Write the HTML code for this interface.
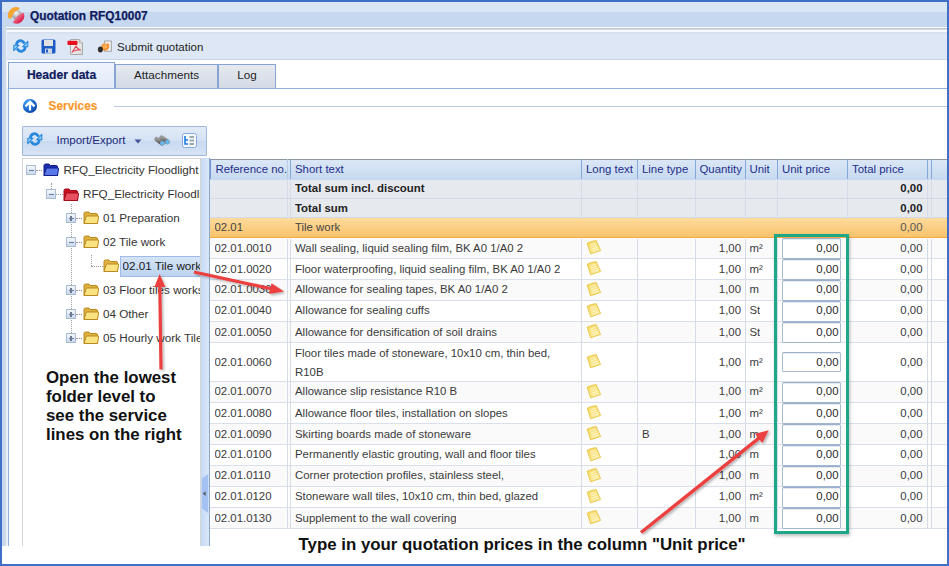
<!DOCTYPE html><html><head><meta charset="utf-8"><style>
*{box-sizing:border-box;margin:0;padding:0}
html,body{width:949px;height:566px;overflow:hidden;background:#fff;font-family:"Liberation Sans",sans-serif;}
.a{position:absolute}
.t{position:absolute;white-space:nowrap}
#frame{left:0;top:0;width:949px;height:566px;border:2px solid #3f6fc6}
#title{left:2px;top:2px;width:945px;height:25px;background:linear-gradient(#d9e6f6 0,#d9e6f6 10.5px,#c5d8ef 10.5px,#c5d8ef 100%)}
#sidebar{left:2px;top:27px;width:4px;height:519px;background:#c6d7ee}
#panel{left:5px;top:28px;width:942px;height:518px;border-left:1px solid #d3dbe6;border-top:1px solid #dfe6ef;background:#eaf0f7}
#toolbar{left:7px;top:30px;width:940px;height:30px;background:linear-gradient(#d6e0ec,#dde7f5 3px,#dde7f5);border-top:2px solid #f6f9fd;border-bottom:1px solid #c8d6ea}
.tab{position:absolute;top:64px;height:25px;border:1px solid #86a5d3;border-bottom:none;background:linear-gradient(#e6eaf0,#d2d9e4);font-size:11.7px;color:#1e1e1e;text-align:center;line-height:20px}
.cell{position:absolute;white-space:nowrap;overflow:hidden;font-size:11.4px;color:#3a3a3a}
.tr{font-size:11.7px;color:#333}
</style></head><body>
<div id="frame" class="a"></div><div id="title" class="a"></div>
<svg class="a" style="left:8.3px;top:6.5px" width="17" height="17" viewBox="0 0 17 17">
<defs><radialGradient id="gg" cx="0.45" cy="0.35" r="0.65"><stop offset="0" stop-color="#fafafa"/><stop offset="1" stop-color="#8c8c8c"/></radialGradient>
<linearGradient id="gr" x1="0.2" y1="0.2" x2="0.9" y2="0.9"><stop offset="0" stop-color="#f4a0b0"/><stop offset="0.6" stop-color="#e23a62"/><stop offset="1" stop-color="#d0103e"/></linearGradient></defs>
<circle cx="8.6" cy="7.6" r="4.8" fill="url(#gg)"/>
<path d="M0.9 11.8 A8 8 0 0 1 11.6 1 L11.2 2.5 Q5.2 3.6 3.4 11.6 Z" fill="#f5a532"/>
<path d="M4.8 15.4 Q8 8.6 15.4 5.6 A7.5 7.5 0 0 1 4.8 15.4 Z" fill="url(#gr)"/>
</svg>
<div class="t" style="left:30px;top:9px;font-size:11.9px;font-weight:bold;color:#0f1a5e;-webkit-text-stroke:0.25px #0f1a5e">Quotation RFQ10007</div>
<div id="sidebar" class="a"></div><div id="panel" class="a"></div><div class="a" style="left:6px;top:28px;width:941px;height:2px;background:#d3d9e2;border-top:1px solid #c4cad4"></div><div id="toolbar" class="a"></div>
<svg class="a" style="left:13px;top:37.5px" width="16" height="16" viewBox="0 0 16 16">
<path d="M3.4 7.4 C3.4 2.4 8.6 0.9 11.6 5.6" fill="none" stroke="#2a88de" stroke-width="2.7"/>
<path d="M9.6 8.8 L14.8 8.8 L14.8 3.4Z" fill="#90d4f8" stroke="#2a88de" stroke-width="1.1" stroke-linejoin="round"/>
<path d="M12.2 8.6 C12.2 13.6 7 15.1 4 10.4" fill="none" stroke="#2a88de" stroke-width="2.7"/>
<path d="M6 7.2 L0.8 7.2 L0.8 12.6Z" fill="#90d4f8" stroke="#2a88de" stroke-width="1.1" stroke-linejoin="round"/>
</svg>
<svg class="a" style="left:41px;top:39px" width="15" height="15" viewBox="0 0 15 15">
<rect x="0.5" y="0.5" width="14" height="14" rx="1.5" fill="#1c5cc4"/>
<rect x="3" y="1" width="9" height="6" fill="#e2e2e2"/>
<rect x="4" y="9.5" width="7" height="5" fill="#cfd8e6"/><rect x="5" y="10.5" width="2" height="3" fill="#1c5cc4"/>
</svg>
<svg class="a" style="left:67px;top:39px" width="17" height="17" viewBox="0 0 17 17">
<defs><linearGradient id="gp" x1="0" y1="0" x2="1" y2="1"><stop offset="0" stop-color="#fafafa"/><stop offset="1" stop-color="#d8d8d8"/></linearGradient></defs>
<path d="M3.5 0.5 H12.2 L15.5 3.8 V15.5 H3.5Z" fill="url(#gp)" stroke="#a9a9a9"/>
<path d="M12.2 0.5 V3.8 H15.5" fill="#e8e8e8" stroke="#b0b0b0"/>
<rect x="0.5" y="1.8" width="10" height="4.2" rx="0.8" fill="#e8101e"/>
<path d="M4.8 13.8 Q7.5 10 9 6.8 M9 7 Q10.5 10.5 13.8 11.3 M5.6 12.6 Q9 11 12.6 10.8" fill="none" stroke="#e04858" stroke-width="1.1"/>
</svg>
<svg class="a" style="left:97px;top:40px" width="16" height="14" viewBox="0 0 16 14">
<rect x="7.6" y="1" width="6.8" height="10.3" fill="#ececec" stroke="#a8a8a8"/>
<path d="M4.3 6.5 Q5 3 8.3 3.4 Q9.3 4.6 10.6 3.2 Q12.6 3.8 12.2 7 Q11.3 10.6 7.5 10.8 Q4.5 10.2 4.3 6.5Z" fill="#f7902e"/>
<ellipse cx="8" cy="6.5" rx="2.5" ry="2.2" fill="#fbb860" opacity="0.8"/>
<ellipse cx="3.4" cy="9.6" rx="2.5" ry="3" fill="#2e2e2e"/>
</svg>
<div class="t" style="left:117px;top:40.5px;font-size:11.5px;color:#1e1e1e">Submit quotation</div>
<div class="a" style="left:7px;top:60px;width:940px;height:28px;background:#fff"></div>
<div class="a" style="left:8px;top:88px;width:939px;height:458px;background:#fff;border-left:1px solid #92b0dc"></div>
<div class="tab" style="left:8px;top:62px;width:107px;height:27px;background:linear-gradient(#eff4fb,#e0e9f6);font-weight:bold;color:#0f1a5e;font-size:12.1px;line-height:24px;-webkit-text-stroke:0.2px #0f1a5e">Header data</div>
<div class="tab" style="left:115px;width:103px">Attachments</div>
<div class="tab" style="left:218px;width:58px">Log</div>
<div class="a" style="left:8px;top:88px;width:939px;height:1px;background:#8fb0e0"></div>
<svg class="a" style="left:22px;top:98px" width="16" height="16" viewBox="0 0 16 16">
<defs><radialGradient id="ga" cx="0.3" cy="0.25" r="0.85"><stop offset="0" stop-color="#3aa2fa"/><stop offset="1" stop-color="#0a40a8"/></radialGradient></defs>
<circle cx="8" cy="8" r="7.1" fill="url(#ga)"/>
<path d="M3.4 8.4 L8 3.9 L12.6 8.4 M8 4.5 V12.6" fill="none" stroke="#fff" stroke-width="2.2"/>
</svg>
<div class="t" style="left:48.5px;top:99px;font-size:11.9px;font-weight:bold;color:#f8982a;-webkit-text-stroke:0.15px #f8982a">Services</div>
<div class="a" style="left:114px;top:106px;width:833px;height:1px;background:#b9c9e1"></div>
<div class="a" style="left:22px;top:126px;width:185px;height:30px;border:1px solid #9fb7da;border-radius:1px;background:linear-gradient(#e2ebf7,#d3e1f3 50%,#c9daf0 51%,#d6e3f4)"></div>
<svg class="a" style="left:26.5px;top:131px" width="16" height="16" viewBox="0 0 16 16">
<path d="M3.4 7.4 C3.4 2.4 8.6 0.9 11.6 5.6" fill="none" stroke="#2a88de" stroke-width="2.7"/>
<path d="M9.6 8.8 L14.8 8.8 L14.8 3.4Z" fill="#90d4f8" stroke="#2a88de" stroke-width="1.1" stroke-linejoin="round"/>
<path d="M12.2 8.6 C12.2 13.6 7 15.1 4 10.4" fill="none" stroke="#2a88de" stroke-width="2.7"/>
<path d="M6 7.2 L0.8 7.2 L0.8 12.6Z" fill="#90d4f8" stroke="#2a88de" stroke-width="1.1" stroke-linejoin="round"/>
</svg>
<div class="t" style="left:56.5px;top:134px;font-size:11.5px;color:#1a2a78">Import/Export</div>
<svg class="a" style="left:134px;top:138.5px" width="8" height="5" viewBox="0 0 8 5"><path d="M0.5 0.5H7.5L4 4.5Z" fill="#44549a"/></svg>
<svg class="a" style="left:154px;top:135px" width="17" height="12" viewBox="0 0 17 12">
<defs><linearGradient id="gb" x1="0" y1="0" x2="0" y2="1"><stop offset="0" stop-color="#9a9a9a"/><stop offset="1" stop-color="#5a5a5a"/></linearGradient></defs>
<path d="M2.6 4.2 L8 8" stroke="url(#gb)" stroke-width="4.6" stroke-linecap="round"/>
<path d="M7.6 2.6 L13 6.6" stroke="url(#gb)" stroke-width="4.6" stroke-linecap="round"/>
<circle cx="8.4" cy="8.2" r="2.2" fill="#62bcf8" stroke="#8090a0" stroke-width="0.6"/>
<circle cx="13.4" cy="7" r="2.2" fill="#62bcf8" stroke="#8090a0" stroke-width="0.6"/>
</svg>
<svg class="a" style="left:182px;top:133px" width="15" height="15" viewBox="0 0 15 15">
<rect x="0.5" y="0.5" width="14" height="14" rx="2" fill="#f4f8fc" stroke="#8aa8d8"/>
<path d="M3 3 V11 H6 M3 7 H6" fill="none" stroke="#1f7ae0" stroke-width="1.6"/>
<rect x="7.5" y="3" width="4.5" height="2" fill="#9aa"/><rect x="7.5" y="6.5" width="4.5" height="2" fill="#9aa"/><rect x="7.5" y="10" width="4.5" height="2" fill="#9aa"/>
</svg>
<div class="a" style="left:22px;top:158px;width:179px;height:388px;border:1px solid #d4d4d4;border-bottom:none;background:#fff"></div>
<div class="a" style="left:200px;top:158px;width:10px;height:388px;border-left:1px solid #d6d6d6;border-right:1px solid #a9b4c4;background:linear-gradient(90deg,#c6daf4,#d9e8fb)"></div>
<svg class="a" style="left:200.5px;top:473.5px" width="8" height="40" viewBox="0 0 8 40"><path d="M0.8 4.5 L7.2 0 V39 L0.8 34.5Z" fill="#a3c2f2"/><path d="M1.8 19.6 L4.6 17.3 V21.9Z" fill="#555"/></svg>
<div class="a" style="left:51px;top:183px;width:0;height:6px;border-left:1px dotted #9a9a9a"></div>
<div class="a" style="left:71px;top:204px;width:0;height:139px;border-left:1px dotted #9a9a9a"></div>
<div class="a" style="left:91px;top:255px;width:0;height:11px;border-left:1px dotted #9a9a9a"></div>
<div class="a" style="left:91px;top:266px;width:12px;height:0;border-top:1px dotted #9a9a9a"></div>
<div class="a" style="left:36px;top:170px;width:6px;height:0;border-top:1px dotted #9a9a9a"></div>
<div class="a" style="left:56px;top:194px;width:7px;height:0;border-top:1px dotted #9a9a9a"></div>
<div class="a" style="left:76px;top:218px;width:6px;height:0;border-top:1px dotted #9a9a9a"></div>
<div class="a" style="left:76px;top:242px;width:6px;height:0;border-top:1px dotted #9a9a9a"></div>
<div class="a" style="left:76px;top:290px;width:6px;height:0;border-top:1px dotted #9a9a9a"></div>
<div class="a" style="left:76px;top:314px;width:6px;height:0;border-top:1px dotted #9a9a9a"></div>
<div class="a" style="left:76px;top:338px;width:6px;height:0;border-top:1px dotted #9a9a9a"></div>
<div class="a" style="left:26px;top:165px;width:10px;height:10px;border:1px solid #a9bdd6;background:linear-gradient(#f4f8fc,#c9d9ec)"></div><div class="a" style="left:28.5px;top:169.5px;width:5px;height:1.2px;background:#6a7a90"></div>
<div class="a" style="left:46px;top:189px;width:10px;height:10px;border:1px solid #a9bdd6;background:linear-gradient(#f4f8fc,#c9d9ec)"></div><div class="a" style="left:48.5px;top:193.5px;width:5px;height:1.2px;background:#6a7a90"></div>
<div class="a" style="left:66px;top:213px;width:10px;height:10px;border:1px solid #a9bdd6;background:linear-gradient(#f4f8fc,#c9d9ec)"></div><div class="a" style="left:68.5px;top:217.5px;width:5px;height:1.2px;background:#6a7a90"></div><div class="a" style="left:70.4px;top:215.5px;width:1.2px;height:5px;background:#6a7a90"></div>
<div class="a" style="left:66px;top:237px;width:10px;height:10px;border:1px solid #a9bdd6;background:linear-gradient(#f4f8fc,#c9d9ec)"></div><div class="a" style="left:68.5px;top:241.5px;width:5px;height:1.2px;background:#6a7a90"></div>
<div class="a" style="left:66px;top:285px;width:10px;height:10px;border:1px solid #a9bdd6;background:linear-gradient(#f4f8fc,#c9d9ec)"></div><div class="a" style="left:68.5px;top:289.5px;width:5px;height:1.2px;background:#6a7a90"></div><div class="a" style="left:70.4px;top:287.5px;width:1.2px;height:5px;background:#6a7a90"></div>
<div class="a" style="left:66px;top:309px;width:10px;height:10px;border:1px solid #a9bdd6;background:linear-gradient(#f4f8fc,#c9d9ec)"></div><div class="a" style="left:68.5px;top:313.5px;width:5px;height:1.2px;background:#6a7a90"></div><div class="a" style="left:70.4px;top:311.5px;width:1.2px;height:5px;background:#6a7a90"></div>
<div class="a" style="left:66px;top:333px;width:10px;height:10px;border:1px solid #a9bdd6;background:linear-gradient(#f4f8fc,#c9d9ec)"></div><div class="a" style="left:68.5px;top:337.5px;width:5px;height:1.2px;background:#6a7a90"></div><div class="a" style="left:70.4px;top:335.5px;width:1.2px;height:5px;background:#6a7a90"></div>
<svg class="a" style="left:43px;top:163px" width="16" height="14" viewBox="0 0 16 14">
<path d="M1 2.5 Q1 1 2.5 1 H6 L7.5 2.5 H13 Q14.5 2.5 14.5 4 V12.5 H1Z" fill="#1b2db0" stroke="#14208a" stroke-width="1"/>
<path d="M1 12.5 L3 6 Q3.3 5 4.5 5 H15 Q16 5 15.6 6 L14.5 12.5Z" fill="#5a78ea" stroke="#14208a" stroke-width="1"/>
</svg>
<svg class="a" style="left:63px;top:187.5px" width="16" height="14" viewBox="0 0 16 14">
<path d="M1 2.5 Q1 1 2.5 1 H6 L7.5 2.5 H13 Q14.5 2.5 14.5 4 V12.5 H1Z" fill="#c81020" stroke="#a00c18" stroke-width="1"/>
<path d="M1 12.5 L3 6 Q3.3 5 4.5 5 H15 Q16 5 15.6 6 L14.5 12.5Z" fill="#e85060" stroke="#a00c18" stroke-width="1"/>
</svg>
<svg class="a" style="left:83px;top:211px" width="16" height="14" viewBox="0 0 16 14">
<path d="M1 2.5 Q1 1 2.5 1 H6 L7.5 2.5 H13 Q14.5 2.5 14.5 4 V12.5 H1Z" fill="#e0b040" stroke="#b88a20" stroke-width="1"/>
<path d="M1 12.5 L3 6 Q3.3 5 4.5 5 H15 Q16 5 15.6 6 L14.5 12.5Z" fill="#fbe283" stroke="#b88a20" stroke-width="1"/>
</svg>
<svg class="a" style="left:83px;top:235px" width="16" height="14" viewBox="0 0 16 14">
<path d="M1 2.5 Q1 1 2.5 1 H6 L7.5 2.5 H13 Q14.5 2.5 14.5 4 V12.5 H1Z" fill="#e0b040" stroke="#b88a20" stroke-width="1"/>
<path d="M1 12.5 L3 6 Q3.3 5 4.5 5 H15 Q16 5 15.6 6 L14.5 12.5Z" fill="#fbe283" stroke="#b88a20" stroke-width="1"/>
</svg>
<svg class="a" style="left:83px;top:283px" width="16" height="14" viewBox="0 0 16 14">
<path d="M1 2.5 Q1 1 2.5 1 H6 L7.5 2.5 H13 Q14.5 2.5 14.5 4 V12.5 H1Z" fill="#e0b040" stroke="#b88a20" stroke-width="1"/>
<path d="M1 12.5 L3 6 Q3.3 5 4.5 5 H15 Q16 5 15.6 6 L14.5 12.5Z" fill="#fbe283" stroke="#b88a20" stroke-width="1"/>
</svg>
<svg class="a" style="left:83px;top:307px" width="16" height="14" viewBox="0 0 16 14">
<path d="M1 2.5 Q1 1 2.5 1 H6 L7.5 2.5 H13 Q14.5 2.5 14.5 4 V12.5 H1Z" fill="#e0b040" stroke="#b88a20" stroke-width="1"/>
<path d="M1 12.5 L3 6 Q3.3 5 4.5 5 H15 Q16 5 15.6 6 L14.5 12.5Z" fill="#fbe283" stroke="#b88a20" stroke-width="1"/>
</svg>
<svg class="a" style="left:83px;top:331px" width="16" height="14" viewBox="0 0 16 14">
<path d="M1 2.5 Q1 1 2.5 1 H6 L7.5 2.5 H13 Q14.5 2.5 14.5 4 V12.5 H1Z" fill="#e0b040" stroke="#b88a20" stroke-width="1"/>
<path d="M1 12.5 L3 6 Q3.3 5 4.5 5 H15 Q16 5 15.6 6 L14.5 12.5Z" fill="#fbe283" stroke="#b88a20" stroke-width="1"/>
</svg>
<svg class="a" style="left:103px;top:259px" width="16" height="14" viewBox="0 0 16 14">
<path d="M1 2.5 Q1 1 2.5 1 H6 L7.5 2.5 H13 Q14.5 2.5 14.5 4 V12.5 H1Z" fill="#e0b040" stroke="#b88a20" stroke-width="1"/>
<path d="M1 12.5 L3 6 Q3.3 5 4.5 5 H15 Q16 5 15.6 6 L14.5 12.5Z" fill="#fbe283" stroke="#b88a20" stroke-width="1"/>
</svg>
<div class="t tr" style="left:63.5px;top:163.3px">RFQ_Electricity Floodlight</div>
<div class="a" style="left:83px;top:187.3px;width:117px;height:16px;overflow:hidden"><div class="t tr" style="left:0;top:0">RFQ_Electricity Floodlight</div></div>
<div class="t tr" style="left:103px;top:211.3px">01 Preparation</div>
<div class="t tr" style="left:103px;top:235.3px">02 Tile work</div>
<div class="a" style="left:120px;top:256px;width:80px;height:21px;background:linear-gradient(#d5e4f6,#bcd3f0);border:1px solid #9dbbe6;border-right:none"></div>
<div class="a" style="left:103px;top:283.3px;width:97px;height:16px;overflow:hidden"><div class="t tr" style="left:0;top:0">03 Floor tiles works</div></div>
<div class="t tr" style="left:103px;top:307.3px">04 Other</div>
<div class="a" style="left:103px;top:331.3px;width:97px;height:16px;overflow:hidden"><div class="t tr" style="left:0;top:0">05 Hourly work Tile</div></div>
<div class="a" style="left:122.5px;top:259.3px;width:77.5px;height:16px;overflow:hidden"><div class="t tr" style="left:0;top:0;color:#1a1a1a">02.01 Tile work</div></div>
<div class="a" style="left:209px;top:158px;width:738px;height:388px;background:#fff;border-left:1px solid #8ea6c8"></div>
<div class="a" style="left:210px;top:158.5px;width:737px;height:21px;background:linear-gradient(#dbe7f6,#c6d9f0);border-top:1px solid #8f96a2"></div>
<svg class="a" width="0" height="0" style="left:0;top:0"><defs><linearGradient id="gn" x1="0" y1="0" x2="1" y2="1"><stop offset="0" stop-color="#f5d860"/><stop offset="1" stop-color="#fbeea8"/></linearGradient></defs></svg>
<div class="a" style="left:210px;top:180px;width:737px;height:19px;background:#e6e9ee;border-bottom:1px solid #d2d8e4"></div>
<div class="cell" style="top:182.35px;left:295px;font-weight:bold;color:#222">Total sum incl. discount</div>
<div class="cell" style="top:182.35px;left:722.5px;width:200px;text-align:right;font-weight:bold;color:#222">0,00</div>
<div class="a" style="left:210px;top:199px;width:737px;height:19px;background:#e6e9ee;border-bottom:1px solid #d2d8e4"></div>
<div class="cell" style="top:202.45px;left:295px;font-weight:bold;color:#222">Total sum</div>
<div class="cell" style="top:202.45px;left:722.5px;width:200px;text-align:right;font-weight:bold;color:#222">0,00</div>
<div class="a" style="left:210px;top:218px;width:737px;height:20px;background:linear-gradient(#fddb9c,#f9c36c);border-bottom:1px solid #f3a845"></div>
<div class="cell" style="top:221.05px;left:214.5px;color:#444">02.01</div>
<div class="cell" style="top:221.05px;left:295px;color:#444">Tile work</div>
<div class="cell" style="top:221.05px;left:722.5px;width:200px;text-align:right;color:#555">0,00</div>
<div class="a" style="left:210px;top:238px;width:737px;height:21px;background:#fafafa;border-bottom:1px solid #d9e0ec"></div>
<div class="cell" style="top:241.8px;left:214.5px;color:#3a3a3a">02.01.0010</div>
<div class="cell" style="top:241.8px;left:295px;color:#3a3a3a">Wall sealing, liquid sealing film, BK A0 1/A0 2</div>
<svg class="a" style="left:585.8px;top:239.9px" width="16" height="15" viewBox="0 0 16 15"><path d="M1.2 3.2 Q5 1.2 10.2 0.6 L14.6 10.4 Q10 12 4.6 13.8Z" fill="url(#gn)" stroke="#e8c444" stroke-width="0.9"/><path d="M4 5 L9.6 3.2 M4.8 7 L10.6 5.2 M5.6 9 L11.6 7.2 M6.4 11 L12.4 9.2" stroke="#fff6d0" stroke-width="0.9"/></svg>
<div class="cell" style="top:241.8px;left:541px;width:200px;text-align:right;color:#3a3a3a">1,00</div>
<div class="cell" style="top:241.8px;left:749.5px;color:#3a3a3a">m²</div>
<div class="a" style="left:782px;top:238.3px;width:59px;height:20.4px;border:1px solid #a9bcd6;border-top:1.6px solid #9db1cc;border-bottom:1.6px solid #a3b6d0;border-radius:1.5px;background:#fff;box-shadow:inset 0 1px 0 #e4e9f0"></div>
<div class="cell" style="top:241.8px;left:638.5px;width:200px;text-align:right;color:#2a2a2a">0,00</div>
<div class="cell" style="top:241.8px;left:722.5px;width:200px;text-align:right;color:#3a3a3a">0,00</div>
<div class="a" style="left:210px;top:259px;width:737px;height:21px;background:#ffffff;border-bottom:1px solid #d9e0ec"></div>
<div class="cell" style="top:262.9px;left:214.5px;color:#3a3a3a">02.01.0020</div>
<div class="cell" style="top:262.9px;left:295px;color:#3a3a3a">Floor waterproofing, liquid sealing film, BK A0 1/A0 2</div>
<svg class="a" style="left:585.8px;top:260.9px" width="16" height="15" viewBox="0 0 16 15"><path d="M1.2 3.2 Q5 1.2 10.2 0.6 L14.6 10.4 Q10 12 4.6 13.8Z" fill="url(#gn)" stroke="#e8c444" stroke-width="0.9"/><path d="M4 5 L9.6 3.2 M4.8 7 L10.6 5.2 M5.6 9 L11.6 7.2 M6.4 11 L12.4 9.2" stroke="#fff6d0" stroke-width="0.9"/></svg>
<div class="cell" style="top:262.9px;left:541px;width:200px;text-align:right;color:#3a3a3a">1,00</div>
<div class="cell" style="top:262.9px;left:749.5px;color:#3a3a3a">m²</div>
<div class="a" style="left:782px;top:259.3px;width:59px;height:20.4px;border:1px solid #a9bcd6;border-top:1.6px solid #9db1cc;border-bottom:1.6px solid #a3b6d0;border-radius:1.5px;background:#fff;box-shadow:inset 0 1px 0 #e4e9f0"></div>
<div class="cell" style="top:262.9px;left:638.5px;width:200px;text-align:right;color:#2a2a2a">0,00</div>
<div class="cell" style="top:262.9px;left:722.5px;width:200px;text-align:right;color:#3a3a3a">0,00</div>
<div class="a" style="left:210px;top:280px;width:737px;height:21px;background:#fafafa;border-bottom:1px solid #d9e0ec"></div>
<div class="cell" style="top:283.4px;left:214.5px;color:#3a3a3a">02.01.0030</div>
<div class="cell" style="top:283.4px;left:295px;color:#3a3a3a">Allowance for sealing tapes, BK A0 1/A0 2</div>
<svg class="a" style="left:585.8px;top:281.9px" width="16" height="15" viewBox="0 0 16 15"><path d="M1.2 3.2 Q5 1.2 10.2 0.6 L14.6 10.4 Q10 12 4.6 13.8Z" fill="url(#gn)" stroke="#e8c444" stroke-width="0.9"/><path d="M4 5 L9.6 3.2 M4.8 7 L10.6 5.2 M5.6 9 L11.6 7.2 M6.4 11 L12.4 9.2" stroke="#fff6d0" stroke-width="0.9"/></svg>
<div class="cell" style="top:283.4px;left:541px;width:200px;text-align:right;color:#3a3a3a">1,00</div>
<div class="cell" style="top:283.4px;left:749.5px;color:#3a3a3a">m</div>
<div class="a" style="left:782px;top:280.3px;width:59px;height:20.4px;border:1px solid #a9bcd6;border-top:1.6px solid #9db1cc;border-bottom:1.6px solid #a3b6d0;border-radius:1.5px;background:#fff;box-shadow:inset 0 1px 0 #e4e9f0"></div>
<div class="cell" style="top:283.4px;left:638.5px;width:200px;text-align:right;color:#2a2a2a">0,00</div>
<div class="cell" style="top:283.4px;left:722.5px;width:200px;text-align:right;color:#3a3a3a">0,00</div>
<div class="a" style="left:210px;top:301px;width:737px;height:21px;background:#ffffff;border-bottom:1px solid #d9e0ec"></div>
<div class="cell" style="top:304px;left:214.5px;color:#3a3a3a">02.01.0040</div>
<div class="cell" style="top:304px;left:295px;color:#3a3a3a">Allowance for sealing cuffs</div>
<svg class="a" style="left:585.8px;top:302.9px" width="16" height="15" viewBox="0 0 16 15"><path d="M1.2 3.2 Q5 1.2 10.2 0.6 L14.6 10.4 Q10 12 4.6 13.8Z" fill="url(#gn)" stroke="#e8c444" stroke-width="0.9"/><path d="M4 5 L9.6 3.2 M4.8 7 L10.6 5.2 M5.6 9 L11.6 7.2 M6.4 11 L12.4 9.2" stroke="#fff6d0" stroke-width="0.9"/></svg>
<div class="cell" style="top:304px;left:541px;width:200px;text-align:right;color:#3a3a3a">1,00</div>
<div class="cell" style="top:304px;left:749.5px;color:#3a3a3a">St</div>
<div class="a" style="left:782px;top:301.3px;width:59px;height:20.4px;border:1px solid #a9bcd6;border-top:1.6px solid #9db1cc;border-bottom:1.6px solid #a3b6d0;border-radius:1.5px;background:#fff;box-shadow:inset 0 1px 0 #e4e9f0"></div>
<div class="cell" style="top:304px;left:638.5px;width:200px;text-align:right;color:#2a2a2a">0,00</div>
<div class="cell" style="top:304px;left:722.5px;width:200px;text-align:right;color:#3a3a3a">0,00</div>
<div class="a" style="left:210px;top:322px;width:737px;height:21px;background:#fafafa;border-bottom:1px solid #d9e0ec"></div>
<div class="cell" style="top:325.5px;left:214.5px;color:#3a3a3a">02.01.0050</div>
<div class="cell" style="top:325.5px;left:295px;color:#3a3a3a">Allowance for densification of soil drains</div>
<svg class="a" style="left:585.8px;top:323.9px" width="16" height="15" viewBox="0 0 16 15"><path d="M1.2 3.2 Q5 1.2 10.2 0.6 L14.6 10.4 Q10 12 4.6 13.8Z" fill="url(#gn)" stroke="#e8c444" stroke-width="0.9"/><path d="M4 5 L9.6 3.2 M4.8 7 L10.6 5.2 M5.6 9 L11.6 7.2 M6.4 11 L12.4 9.2" stroke="#fff6d0" stroke-width="0.9"/></svg>
<div class="cell" style="top:325.5px;left:541px;width:200px;text-align:right;color:#3a3a3a">1,00</div>
<div class="cell" style="top:325.5px;left:749.5px;color:#3a3a3a">St</div>
<div class="a" style="left:782px;top:322.3px;width:59px;height:20.4px;border:1px solid #a9bcd6;border-top:1.6px solid #9db1cc;border-bottom:1.6px solid #a3b6d0;border-radius:1.5px;background:#fff;box-shadow:inset 0 1px 0 #e4e9f0"></div>
<div class="cell" style="top:325.5px;left:638.5px;width:200px;text-align:right;color:#2a2a2a">0,00</div>
<div class="cell" style="top:325.5px;left:722.5px;width:200px;text-align:right;color:#3a3a3a">0,00</div>
<div class="a" style="left:210px;top:343px;width:737px;height:39px;background:#ffffff;border-bottom:1px solid #d9e0ec"></div>
<div class="cell" style="top:355.95px;left:214.5px;color:#3a3a3a">02.01.0060</div>
<div class="cell" style="left:295px;top:346.65px">Floor tiles made of stoneware, 10x10 cm, thin bed,</div>
<div class="cell" style="left:295px;top:365.55px">R10B</div>
<svg class="a" style="left:585.8px;top:353.9px" width="16" height="15" viewBox="0 0 16 15"><path d="M1.2 3.2 Q5 1.2 10.2 0.6 L14.6 10.4 Q10 12 4.6 13.8Z" fill="url(#gn)" stroke="#e8c444" stroke-width="0.9"/><path d="M4 5 L9.6 3.2 M4.8 7 L10.6 5.2 M5.6 9 L11.6 7.2 M6.4 11 L12.4 9.2" stroke="#fff6d0" stroke-width="0.9"/></svg>
<div class="cell" style="top:355.95px;left:541px;width:200px;text-align:right;color:#3a3a3a">1,00</div>
<div class="cell" style="top:355.95px;left:749.5px;color:#3a3a3a">m²</div>
<div class="a" style="left:782px;top:352.25px;width:59px;height:19.5px;border:1px solid #a9bcd6;border-top:1.6px solid #9db1cc;border-bottom:1.6px solid #a3b6d0;border-radius:1.5px;background:#fff;box-shadow:inset 0 1px 0 #e4e9f0"></div>
<div class="cell" style="top:355.95px;left:638.5px;width:200px;text-align:right;color:#2a2a2a">0,00</div>
<div class="cell" style="top:355.95px;left:722.5px;width:200px;text-align:right;color:#3a3a3a">0,00</div>
<div class="a" style="left:210px;top:382px;width:737px;height:21px;background:#fafafa;border-bottom:1px solid #d9e0ec"></div>
<div class="cell" style="top:385px;left:214.5px;color:#3a3a3a">02.01.0070</div>
<div class="cell" style="top:385px;left:295px;color:#3a3a3a">Allowance slip resistance R10 B</div>
<svg class="a" style="left:585.8px;top:383.9px" width="16" height="15" viewBox="0 0 16 15"><path d="M1.2 3.2 Q5 1.2 10.2 0.6 L14.6 10.4 Q10 12 4.6 13.8Z" fill="url(#gn)" stroke="#e8c444" stroke-width="0.9"/><path d="M4 5 L9.6 3.2 M4.8 7 L10.6 5.2 M5.6 9 L11.6 7.2 M6.4 11 L12.4 9.2" stroke="#fff6d0" stroke-width="0.9"/></svg>
<div class="cell" style="top:385px;left:541px;width:200px;text-align:right;color:#3a3a3a">1,00</div>
<div class="cell" style="top:385px;left:749.5px;color:#3a3a3a">m²</div>
<div class="a" style="left:782px;top:382.3px;width:59px;height:20.4px;border:1px solid #a9bcd6;border-top:1.6px solid #9db1cc;border-bottom:1.6px solid #a3b6d0;border-radius:1.5px;background:#fff;box-shadow:inset 0 1px 0 #e4e9f0"></div>
<div class="cell" style="top:385px;left:638.5px;width:200px;text-align:right;color:#2a2a2a">0,00</div>
<div class="cell" style="top:385px;left:722.5px;width:200px;text-align:right;color:#3a3a3a">0,00</div>
<div class="a" style="left:210px;top:403px;width:737px;height:21px;background:#ffffff;border-bottom:1px solid #d9e0ec"></div>
<div class="cell" style="top:406.85px;left:214.5px;color:#3a3a3a">02.01.0080</div>
<div class="cell" style="top:406.85px;left:295px;color:#3a3a3a">Allowance floor tiles, installation on slopes</div>
<svg class="a" style="left:585.8px;top:404.9px" width="16" height="15" viewBox="0 0 16 15"><path d="M1.2 3.2 Q5 1.2 10.2 0.6 L14.6 10.4 Q10 12 4.6 13.8Z" fill="url(#gn)" stroke="#e8c444" stroke-width="0.9"/><path d="M4 5 L9.6 3.2 M4.8 7 L10.6 5.2 M5.6 9 L11.6 7.2 M6.4 11 L12.4 9.2" stroke="#fff6d0" stroke-width="0.9"/></svg>
<div class="cell" style="top:406.85px;left:541px;width:200px;text-align:right;color:#3a3a3a">1,00</div>
<div class="cell" style="top:406.85px;left:749.5px;color:#3a3a3a">m²</div>
<div class="a" style="left:782px;top:403.3px;width:59px;height:20.4px;border:1px solid #a9bcd6;border-top:1.6px solid #9db1cc;border-bottom:1.6px solid #a3b6d0;border-radius:1.5px;background:#fff;box-shadow:inset 0 1px 0 #e4e9f0"></div>
<div class="cell" style="top:406.85px;left:638.5px;width:200px;text-align:right;color:#2a2a2a">0,00</div>
<div class="cell" style="top:406.85px;left:722.5px;width:200px;text-align:right;color:#3a3a3a">0,00</div>
<div class="a" style="left:210px;top:424px;width:737px;height:21px;background:#fafafa;border-bottom:1px solid #d9e0ec"></div>
<div class="cell" style="top:427.85px;left:214.5px;color:#3a3a3a">02.01.0090</div>
<div class="cell" style="top:427.85px;left:295px;color:#3a3a3a">Skirting boards made of stoneware</div>
<svg class="a" style="left:585.8px;top:425.9px" width="16" height="15" viewBox="0 0 16 15"><path d="M1.2 3.2 Q5 1.2 10.2 0.6 L14.6 10.4 Q10 12 4.6 13.8Z" fill="url(#gn)" stroke="#e8c444" stroke-width="0.9"/><path d="M4 5 L9.6 3.2 M4.8 7 L10.6 5.2 M5.6 9 L11.6 7.2 M6.4 11 L12.4 9.2" stroke="#fff6d0" stroke-width="0.9"/></svg>
<div class="cell" style="top:427.85px;left:642px;color:#3a3a3a">B</div>
<div class="cell" style="top:427.85px;left:541px;width:200px;text-align:right;color:#3a3a3a">1,00</div>
<div class="cell" style="top:427.85px;left:749.5px;color:#3a3a3a">m</div>
<div class="a" style="left:782px;top:424.3px;width:59px;height:20.4px;border:1px solid #a9bcd6;border-top:1.6px solid #9db1cc;border-bottom:1.6px solid #a3b6d0;border-radius:1.5px;background:#fff;box-shadow:inset 0 1px 0 #e4e9f0"></div>
<div class="cell" style="top:427.85px;left:638.5px;width:200px;text-align:right;color:#2a2a2a">0,00</div>
<div class="cell" style="top:427.85px;left:722.5px;width:200px;text-align:right;color:#3a3a3a">0,00</div>
<div class="a" style="left:210px;top:445px;width:737px;height:21px;background:#ffffff;border-bottom:1px solid #d9e0ec"></div>
<div class="cell" style="top:448.35px;left:214.5px;color:#3a3a3a">02.01.0100</div>
<div class="cell" style="top:448.35px;left:295px;color:#3a3a3a">Permanently elastic grouting, wall and floor tiles</div>
<svg class="a" style="left:585.8px;top:446.9px" width="16" height="15" viewBox="0 0 16 15"><path d="M1.2 3.2 Q5 1.2 10.2 0.6 L14.6 10.4 Q10 12 4.6 13.8Z" fill="url(#gn)" stroke="#e8c444" stroke-width="0.9"/><path d="M4 5 L9.6 3.2 M4.8 7 L10.6 5.2 M5.6 9 L11.6 7.2 M6.4 11 L12.4 9.2" stroke="#fff6d0" stroke-width="0.9"/></svg>
<div class="cell" style="top:448.35px;left:541px;width:200px;text-align:right;color:#3a3a3a">1,00</div>
<div class="cell" style="top:448.35px;left:749.5px;color:#3a3a3a">m</div>
<div class="a" style="left:782px;top:445.3px;width:59px;height:20.4px;border:1px solid #a9bcd6;border-top:1.6px solid #9db1cc;border-bottom:1.6px solid #a3b6d0;border-radius:1.5px;background:#fff;box-shadow:inset 0 1px 0 #e4e9f0"></div>
<div class="cell" style="top:448.35px;left:638.5px;width:200px;text-align:right;color:#2a2a2a">0,00</div>
<div class="cell" style="top:448.35px;left:722.5px;width:200px;text-align:right;color:#3a3a3a">0,00</div>
<div class="a" style="left:210px;top:466px;width:737px;height:21px;background:#fafafa;border-bottom:1px solid #d9e0ec"></div>
<div class="cell" style="top:468.7px;left:214.5px;color:#3a3a3a">02.01.0110</div>
<div class="cell" style="top:468.7px;left:295px;color:#3a3a3a">Corner protection profiles, stainless steel,</div>
<svg class="a" style="left:585.8px;top:467.9px" width="16" height="15" viewBox="0 0 16 15"><path d="M1.2 3.2 Q5 1.2 10.2 0.6 L14.6 10.4 Q10 12 4.6 13.8Z" fill="url(#gn)" stroke="#e8c444" stroke-width="0.9"/><path d="M4 5 L9.6 3.2 M4.8 7 L10.6 5.2 M5.6 9 L11.6 7.2 M6.4 11 L12.4 9.2" stroke="#fff6d0" stroke-width="0.9"/></svg>
<div class="cell" style="top:468.7px;left:541px;width:200px;text-align:right;color:#3a3a3a">1,00</div>
<div class="cell" style="top:468.7px;left:749.5px;color:#3a3a3a">m</div>
<div class="a" style="left:782px;top:466.3px;width:59px;height:20.4px;border:1px solid #a9bcd6;border-top:1.6px solid #9db1cc;border-bottom:1.6px solid #a3b6d0;border-radius:1.5px;background:#fff;box-shadow:inset 0 1px 0 #e4e9f0"></div>
<div class="cell" style="top:468.7px;left:638.5px;width:200px;text-align:right;color:#2a2a2a">0,00</div>
<div class="cell" style="top:468.7px;left:722.5px;width:200px;text-align:right;color:#3a3a3a">0,00</div>
<div class="a" style="left:210px;top:487px;width:737px;height:21px;background:#ffffff;border-bottom:1px solid #d9e0ec"></div>
<div class="cell" style="top:490.1px;left:214.5px;color:#3a3a3a">02.01.0120</div>
<div class="cell" style="top:490.1px;left:295px;color:#3a3a3a">Stoneware wall tiles, 10x10 cm, thin bed, glazed</div>
<svg class="a" style="left:585.8px;top:488.9px" width="16" height="15" viewBox="0 0 16 15"><path d="M1.2 3.2 Q5 1.2 10.2 0.6 L14.6 10.4 Q10 12 4.6 13.8Z" fill="url(#gn)" stroke="#e8c444" stroke-width="0.9"/><path d="M4 5 L9.6 3.2 M4.8 7 L10.6 5.2 M5.6 9 L11.6 7.2 M6.4 11 L12.4 9.2" stroke="#fff6d0" stroke-width="0.9"/></svg>
<div class="cell" style="top:490.1px;left:541px;width:200px;text-align:right;color:#3a3a3a">1,00</div>
<div class="cell" style="top:490.1px;left:749.5px;color:#3a3a3a">m²</div>
<div class="a" style="left:782px;top:487.3px;width:59px;height:20.4px;border:1px solid #a9bcd6;border-top:1.6px solid #9db1cc;border-bottom:1.6px solid #a3b6d0;border-radius:1.5px;background:#fff;box-shadow:inset 0 1px 0 #e4e9f0"></div>
<div class="cell" style="top:490.1px;left:638.5px;width:200px;text-align:right;color:#2a2a2a">0,00</div>
<div class="cell" style="top:490.1px;left:722.5px;width:200px;text-align:right;color:#3a3a3a">0,00</div>
<div class="a" style="left:210px;top:508px;width:737px;height:21px;background:#fafafa;border-bottom:1px solid #d9e0ec"></div>
<div class="cell" style="top:511.6px;left:214.5px;color:#3a3a3a">02.01.0130</div>
<div class="cell" style="top:511.6px;left:295px;color:#3a3a3a">Supplement to the wall covering</div>
<svg class="a" style="left:585.8px;top:509.9px" width="16" height="15" viewBox="0 0 16 15"><path d="M1.2 3.2 Q5 1.2 10.2 0.6 L14.6 10.4 Q10 12 4.6 13.8Z" fill="url(#gn)" stroke="#e8c444" stroke-width="0.9"/><path d="M4 5 L9.6 3.2 M4.8 7 L10.6 5.2 M5.6 9 L11.6 7.2 M6.4 11 L12.4 9.2" stroke="#fff6d0" stroke-width="0.9"/></svg>
<div class="cell" style="top:511.6px;left:541px;width:200px;text-align:right;color:#3a3a3a">1,00</div>
<div class="cell" style="top:511.6px;left:749.5px;color:#3a3a3a">m</div>
<div class="a" style="left:782px;top:508.3px;width:59px;height:20.4px;border:1px solid #a9bcd6;border-top:1.6px solid #9db1cc;border-bottom:1.6px solid #a3b6d0;border-radius:1.5px;background:#fff;box-shadow:inset 0 1px 0 #e4e9f0"></div>
<div class="cell" style="top:511.6px;left:638.5px;width:200px;text-align:right;color:#2a2a2a">0,00</div>
<div class="cell" style="top:511.6px;left:722.5px;width:200px;text-align:right;color:#3a3a3a">0,00</div>
<div class="a" style="left:287px;top:179px;width:1px;height:39.5px;background:#d5dce8"></div>
<div class="a" style="left:290px;top:179px;width:1px;height:39.5px;background:#d5dce8"></div>
<div class="a" style="left:581px;top:179px;width:1px;height:39.5px;background:#d5dce8"></div>
<div class="a" style="left:637px;top:179px;width:1px;height:39.5px;background:#d5dce8"></div>
<div class="a" style="left:695px;top:179px;width:1px;height:39.5px;background:#d5dce8"></div>
<div class="a" style="left:745px;top:179px;width:1px;height:39.5px;background:#d5dce8"></div>
<div class="a" style="left:777px;top:179px;width:1px;height:39.5px;background:#d5dce8"></div>
<div class="a" style="left:847px;top:179px;width:1px;height:39.5px;background:#d5dce8"></div>
<div class="a" style="left:927px;top:179px;width:1px;height:39.5px;background:#d5dce8"></div>
<div class="a" style="left:931px;top:179px;width:1px;height:39.5px;background:#d5dce8"></div>
<div class="a" style="left:287px;top:238.5px;width:1px;height:289.5px;background:#d5dce8"></div>
<div class="a" style="left:290px;top:238.5px;width:1px;height:289.5px;background:#d5dce8"></div>
<div class="a" style="left:581px;top:238.5px;width:1px;height:289.5px;background:#d5dce8"></div>
<div class="a" style="left:637px;top:238.5px;width:1px;height:289.5px;background:#d5dce8"></div>
<div class="a" style="left:695px;top:238.5px;width:1px;height:289.5px;background:#d5dce8"></div>
<div class="a" style="left:745px;top:238.5px;width:1px;height:289.5px;background:#d5dce8"></div>
<div class="a" style="left:777px;top:238.5px;width:1px;height:289.5px;background:#d5dce8"></div>
<div class="a" style="left:847px;top:238.5px;width:1px;height:289.5px;background:#d5dce8"></div>
<div class="a" style="left:927px;top:238.5px;width:1px;height:289.5px;background:#d5dce8"></div>
<div class="a" style="left:931px;top:238.5px;width:1px;height:289.5px;background:#d5dce8"></div>
<div class="a" style="left:287px;top:159px;width:1px;height:20px;background:#b9cde9"></div>
<div class="a" style="left:290px;top:159px;width:1px;height:20px;background:#86a9dc"></div>
<div class="a" style="left:581px;top:159px;width:1px;height:20px;background:#86a9dc"></div>
<div class="a" style="left:637px;top:159px;width:1px;height:20px;background:#86a9dc"></div>
<div class="a" style="left:695px;top:159px;width:1px;height:20px;background:#86a9dc"></div>
<div class="a" style="left:745px;top:159px;width:1px;height:20px;background:#86a9dc"></div>
<div class="a" style="left:777px;top:159px;width:1px;height:20px;background:#86a9dc"></div>
<div class="a" style="left:847px;top:159px;width:1px;height:20px;background:#86a9dc"></div>
<div class="a" style="left:927px;top:159px;width:1px;height:20px;background:#86a9dc"></div>
<div class="a" style="left:931px;top:159px;width:1px;height:20px;background:#86a9dc"></div>
<div class="a" style="left:210px;top:159px;width:1px;height:20px;background:#6f96d4"></div>
<div class="cell" style="left:215.5px;top:163px;color:#1e2f8a">Reference no.</div>
<div class="cell" style="left:295px;top:163px;color:#1e2f8a">Short text</div>
<div class="cell" style="left:586px;top:163px;color:#1e2f8a">Long text</div>
<div class="cell" style="left:642px;top:163px;color:#1e2f8a">Line type</div>
<div class="cell" style="left:699.5px;top:163px;color:#1e2f8a">Quantity</div>
<div class="cell" style="left:749.5px;top:163px;color:#1e2f8a">Unit</div>
<div class="cell" style="left:782px;top:163px;color:#1e2f8a">Unit price</div>
<div class="cell" style="left:852px;top:163px;color:#1e2f8a">Total price</div>
<div class="t" style="left:46px;top:367.8px;font-size:16.85px;font-weight:bold;color:#111;line-height:19.1px;white-space:pre">Open the lowest
folder level to
see the service
lines on the right</div>
<div class="t" style="left:298.5px;top:535px;font-size:16.85px;font-weight:bold;color:#111">Type in your quotation prices in the column "Unit price"</div>
<div class="a" style="left:774px;top:234px;width:74.5px;height:300px;border:3px solid #1ea888;box-shadow:1px 2px 3px rgba(0,0,0,0.25)"></div>
<svg class="a" style="left:0;top:0" width="949" height="566" viewBox="0 0 949 566">
<defs><filter id="sh" x="-20%" y="-20%" width="140%" height="140%"><feDropShadow dx="1.5" dy="1.5" stdDeviation="1.2" flood-color="#000" flood-opacity="0.3"/></filter></defs>
<g filter="url(#sh)" fill="#ec4040" stroke="#ec4040"><path d="M194.0 272.0 L272.3 289.0" stroke-width="3.2" fill="none"/><path d="M284.0 291.5 L269.2 293.9 L271.5 283.2Z" stroke="none"/><path d="M161.0 369.5 L159.8 285.0" stroke-width="3.2" fill="none"/><path d="M159.6 274.0 L165.3 286.9 L154.3 287.1Z" stroke="none"/><path d="M641.0 532.5 L760.2 437.1" stroke-width="3.4" fill="none"/><path d="M768.8 430.2 L762.3 442.9 L755.0 433.8Z" stroke="none"/></g></svg>
</body></html>
